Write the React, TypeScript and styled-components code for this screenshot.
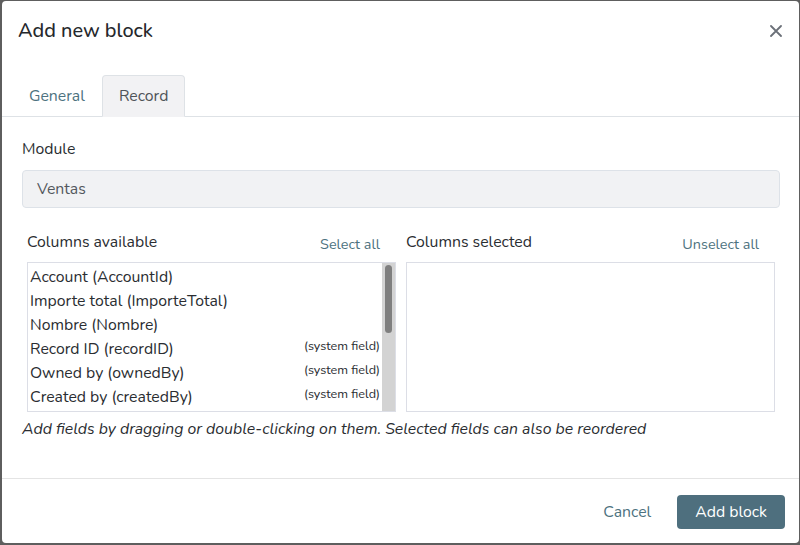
import styled, { createGlobalStyle } from "styled-components";

const GlobalStyle = createGlobalStyle`
  html, body {
    margin: 0;
    padding: 0;
    background-color: #5e5e5e;
  }
  body {
    font-family: "Nunito", Lato, "Open Sans", sans-serif;
    color: #2a2d31;
  }
  * {
    box-sizing: border-box;
  }
`;

const available = [
  { label: "Account (AccountId)" },
  { label: "Importe total (ImporteTotal)" },
  { label: "Nombre (Nombre)" },
  { label: "Record ID (recordID)", system: true },
  { label: "Owned by (ownedBy)", system: true },
  { label: "Created by (createdBy)", system: true },
];

// visible part of the list, as a share of its full height
const scrollShare = 0.47;

const App = () => {
  return (
    <>
      <GlobalStyle />
      <Backdrop>
        <Dialog>
          <Header>
            <Title>Add new block</Title>
            <Close aria-label="Close">
              <svg width="12" height="12" viewBox="0 0 12 12">
                <path
                  d="M1 1 L11 11 M11 1 L1 11"
                  stroke="#6b7078"
                  strokeWidth="1.8"
                  strokeLinecap="round"
                />
              </svg>
            </Close>
          </Header>

          <Tabs>
            <Tab>General</Tab>
            <Tab $active>Record</Tab>
          </Tabs>

          <Body>
            <FieldLabel>Module</FieldLabel>
            <ReadOnlyInput>Ventas</ReadOnlyInput>

            <Columns>
              <Column>
                <ColumnHead>
                  <ColumnTitle>Columns available</ColumnTitle>
                  <LinkBtn>Select all</LinkBtn>
                </ColumnHead>
                <ListBox>
                  <Items>
                    {available.map((f) => (
                      <Item key={f.label}>
                        {f.label}
                        {f.system && <Tag>(system field)</Tag>}
                      </Item>
                    ))}
                  </Items>
                  <ScrollTrack>
                    <ScrollThumb style={{ height: `${scrollShare * 100}%` }} />
                  </ScrollTrack>
                </ListBox>
              </Column>
              <Column>
                <ColumnHead>
                  <ColumnTitle>Columns selected</ColumnTitle>
                  <LinkBtn>Unselect all</LinkBtn>
                </ColumnHead>
                <ListBox />
              </Column>
            </Columns>

            <Hint>
              Add fields by dragging or double-clicking on them. Selected fields
              can also be reordered
            </Hint>
          </Body>

          <Footer>
            <CancelBtn>Cancel</CancelBtn>
            <PrimaryBtn>Add block</PrimaryBtn>
          </Footer>
        </Dialog>
      </Backdrop>
    </>
  );
};

export default App;

const Backdrop = styled.div`
  width: 800px;
  height: 545px;
  padding: 1px 1px 2px 2px;
`;

const Dialog = styled.div`
  display: flex;
  flex-direction: column;
  height: 100%;
  background-color: #fff;
  border-radius: 4px;
  overflow: hidden;
`;

const Header = styled.div`
  display: flex;
  align-items: center;
  justify-content: space-between;
  padding: 18px 16px 0 16px;
`;

const Title = styled.h5`
  margin: 0;
  font-size: 19.9px;
  font-weight: 500;
  line-height: 24px;
  color: #25282c;
`;

const Close = styled.button`
  display: flex;
  align-items: center;
  justify-content: center;
  width: 24px;
  height: 24px;
  margin-right: -5px;
  padding: 0;
  border: none;
  background: none;
  cursor: pointer;
`;

const Tabs = styled.div`
  display: flex;
  margin-top: 32px;
  padding-left: 10px;
  border-bottom: 1px solid #dee2e6;
`;

const Tab = styled.div<{ $active?: boolean }>`
  margin-bottom: -1px;
  padding: 8px 16px;
  font-size: 15.8px;
  line-height: 24px;
  border: 1px solid ${(p) => (p.$active ? "#dee2e6" : "transparent")};
  border-bottom-color: ${(p) => (p.$active ? "#f2f2f4" : "transparent")};
  border-radius: 4px 4px 0 0;
  background-color: ${(p) => (p.$active ? "#f2f2f4" : "transparent")};
  color: ${(p) => (p.$active ? "#4f5459" : "#4d7280")};
  cursor: pointer;
`;

const Body = styled.div`
  flex: 1;
  padding: 20px 19px 0 20px;
`;

const FieldLabel = styled.div`
  font-size: 15.8px;
  line-height: 24px;
  color: #2a2d31;
`;

const ReadOnlyInput = styled.div`
  margin-top: 9px;
  height: 38px;
  padding: 0 14px;
  display: flex;
  align-items: center;
  font-size: 15.8px;
  color: #53585e;
  background-color: #f1f2f4;
  border: 1px solid #dde2e8;
  border-radius: 4px;
`;

const Columns = styled.div`
  display: grid;
  grid-template-columns: 1fr 1fr;
  gap: 10px;
  margin-top: 22px;
  padding: 0 5px;
`;

const Column = styled.div`
  display: flex;
  flex-direction: column;
`;

const ColumnHead = styled.div`
  display: flex;
  align-items: flex-end;
  justify-content: space-between;
  height: 24px;
  margin-bottom: 8px;
`;

const ColumnTitle = styled.div`
  font-size: 15.8px;
  line-height: 24px;
  color: #2a2d31;
`;

const LinkBtn = styled.span`
  padding-right: 16px;
  font-size: 14.4px;
  line-height: 20px;
  color: #4d7280;
  cursor: pointer;
`;

const ListBox = styled.div`
  display: flex;
  height: 150px;
  border: 1px solid #dcdee6;
  overflow: hidden;
`;

const Items = styled.div`
  flex: 1;
  min-width: 0;
  padding: 2px 2px 0 2px;
`;

const Item = styled.div`
  display: flex;
  align-items: center;
  justify-content: space-between;
  font-size: 15.8px;
  line-height: 24px;
  color: #2a2d31;
  white-space: nowrap;
  cursor: grab;
`;

const Tag = styled.span`
  font-size: 12.6px;
  line-height: 16px;
  margin-top: -6px;
  color: #2a2d31;
`;

const ScrollTrack = styled.div`
  width: 13px;
  padding: 2px 3px;
  background-color: #d3d3d3;
`;

const ScrollThumb = styled.div`
  width: 100%;
  background-color: #7f7f7f;
  border-radius: 4px;
`;

const Hint = styled.p`
  margin: 5px 0 0 0;
  font-size: 15.8px;
  line-height: 24px;
  font-style: italic;
  color: #2a2d31;
`;

const Footer = styled.div`
  display: flex;
  align-items: center;
  justify-content: flex-end;
  gap: 14px;
  padding: 16px 14px 14px 16px;
  border-top: 1px solid #e4e4e4;
`;

const CancelBtn = styled.button`
  padding: 5px 12px;
  font-family: inherit;
  font-size: 15.8px;
  line-height: 24px;
  color: #4d7280;
  background: none;
  border: none;
  cursor: pointer;
`;

const PrimaryBtn = styled.button`
  height: 34px;
  padding: 0 18px;
  font-family: inherit;
  font-size: 15.8px;
  color: #fff;
  background-color: #4e6f7e;
  border: none;
  border-radius: 4px;
  cursor: pointer;
`;
